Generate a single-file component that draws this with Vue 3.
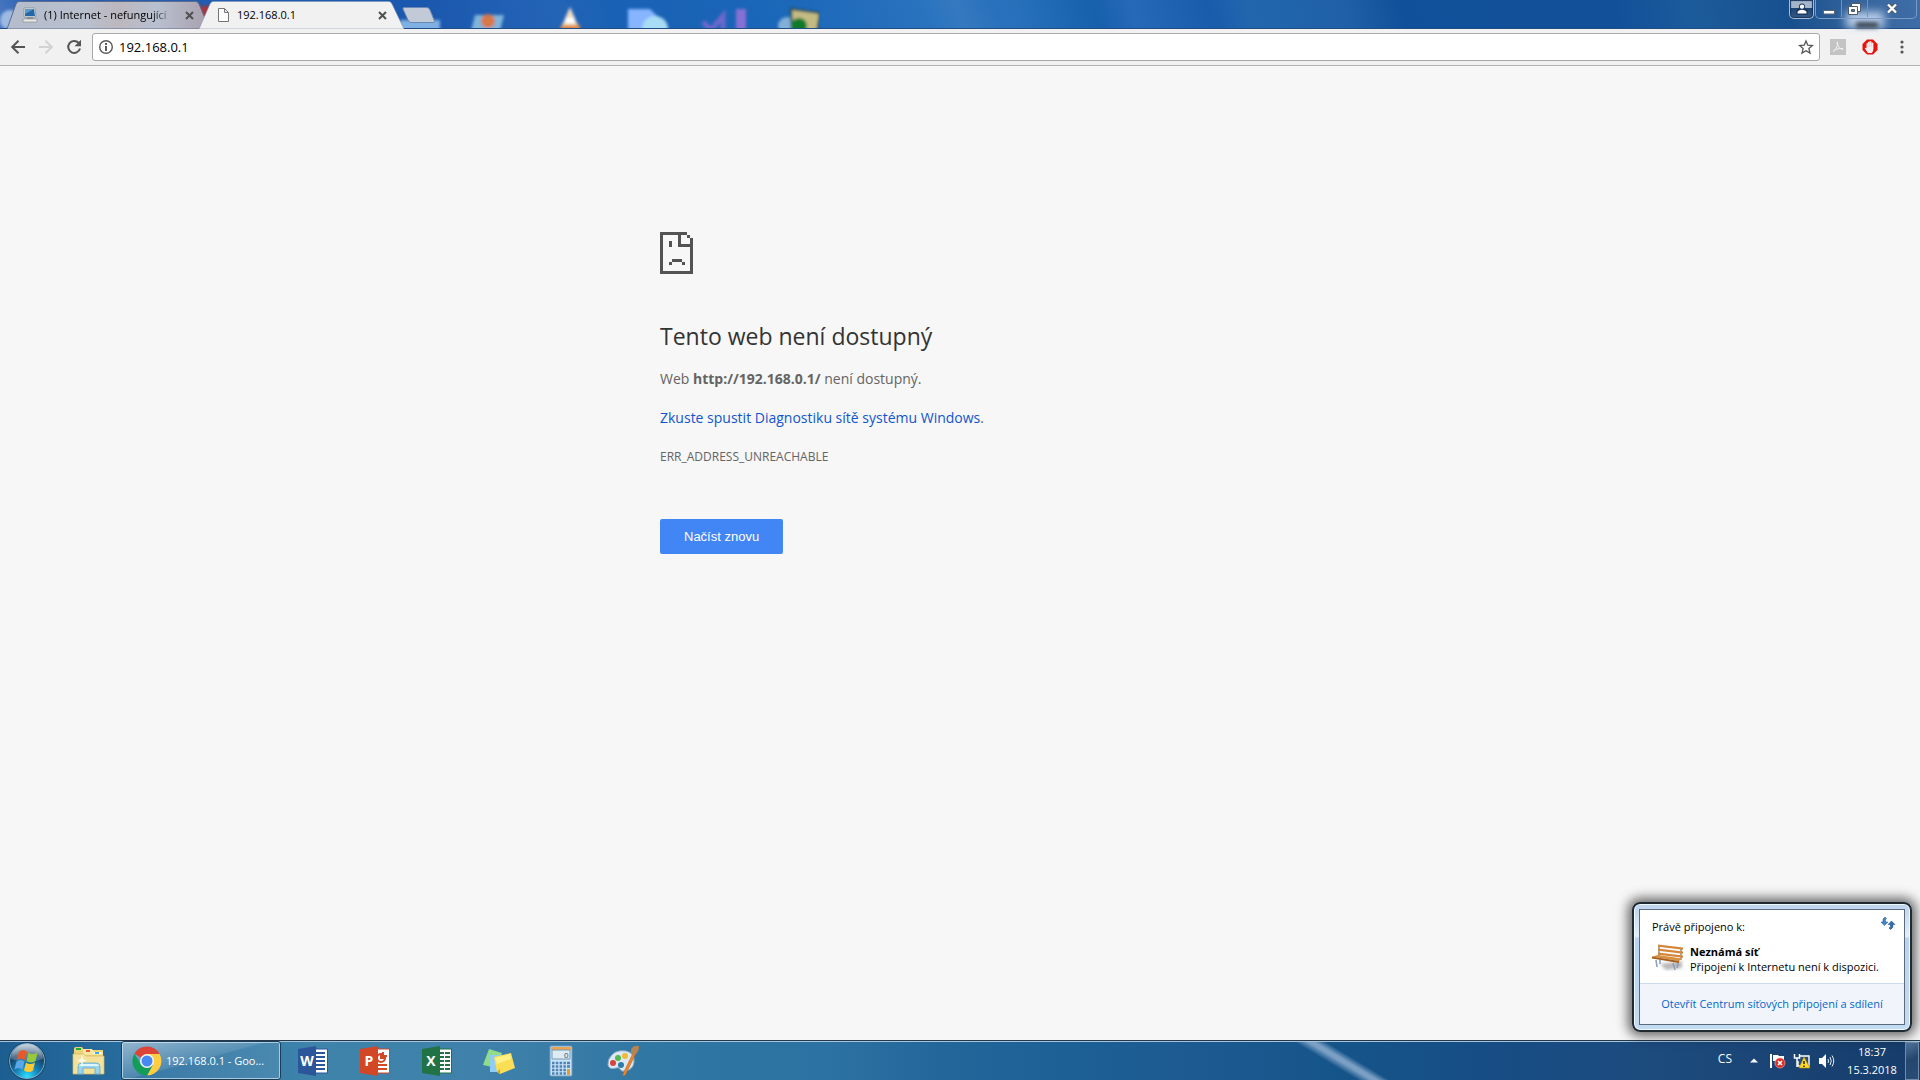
<template>
  <div class="desktop">
    <header class="titlebar">
      <svg class="wallpaper-icons" width="820" height="28" viewBox="0 0 820 28" aria-hidden="true">
        <defs><filter id="glass" x="-20%" y="-20%" width="140%" height="140%"><feGaussianBlur stdDeviation="1.600" /></filter></defs>
        <g filter="url(#glass)">
          <rect x="196" y="6" width="22" height="22" fill="#a8343c" />
          <circle cx="10" cy="20" r="10" fill="#9dbbe2" />
          <rect x="400" y="20" width="40" height="12" fill="#7fb0e4" />
          <path d="M475 15h29l-4 16h-29z" fill="#7fb4dc" />
          <circle cx="488" cy="21" r="7" fill="#d8784a" />
          <path d="M570 7l10 23h-20z" fill="#f2ddc8" />
          <path d="M566 18h8v5h-8z" fill="#fff" />
          <path d="M561 25h19v5h-19z" fill="#e08a3c" />
          <path d="M628 9h22l8 8v14h-30z" fill="#86b4ff" />
          <circle cx="655" cy="29" r="13" fill="#a8dcf4" />
          <path d="M703 22l8 8 12-14v16" fill="none" stroke="#6d68cc" stroke-width="5" />
          <path d="M736 9h10v22h-10z" fill="#8670d4" />
          <circle cx="787" cy="26" r="9" fill="#83b0d8" />
          <path d="M791 9l29 4-3 20h-25z" fill="#c4bb84" stroke="#26434a" stroke-width="2" />
          <circle cx="799" cy="26" r="8" fill="#0d7a2c" />
        </g>
      </svg>

      <nav class="tabs" aria-label="Karty">
        <div class="tab idle">
          <svg class="tab-shape" viewBox="0 0 200 28" preserveAspectRatio="none" aria-hidden="true">
            <defs>
              <linearGradient id="idleTab">
                <stop offset="0" stop-color="#b4bccd" /><stop offset=".4" stop-color="#b9c0ce" />
                <stop offset=".55" stop-color="#bcb7be" /><stop offset=".75" stop-color="#b8c0d0" />
                <stop offset="1" stop-color="#aaa0ae" />
              </linearGradient>
            </defs>
            <path d="M0 28L9 3Q10 .5 12 .5H189Q191 .5 192 3L200 22V28Z" fill="url(#idleTab)" stroke="#5d6c8c" />
          </svg>
          <svg class="favicon" viewBox="0 0 16 16" aria-hidden="true">
            <path d="M2 1h11l1 9H2z" fill="#e4e8e8" stroke="#7d8990" stroke-width=".7" />
            <path d="M3 2h9l1 7H3z" fill="#2566a4" /><path d="M3 2h9L3 7z" fill="#5b9aca" />
            <path d="M5 10h6v2H5z" fill="#8b9399" /><path d="M1 12h14v3H1z" fill="#e8e8e2" stroke="#7f8588" stroke-width=".6" />
          </svg>
          <button class="tab-title" type="button">(1) Internet - nefungující</button>
          <button class="tab-close" type="button" aria-label="Zavřít kartu">
            <svg viewBox="0 0 9 9"><path d="M1 1l7 7M8 1L1 8" /></svg>
          </button>
        </div>
        <div class="tab active">
          <svg class="tab-shape" viewBox="0 0 206 28" preserveAspectRatio="none" aria-hidden="true">
            <path d="M0 28L11 3Q12 .5 14 .5H190Q192 .5 193 3L205 28Z" fill="#f2f1f2" stroke="#7f95b5" stroke-width=".6" />
          </svg>
          <svg class="favicon" viewBox="0 0 16 16" aria-hidden="true">
            <path d="M3.500 1.500h6l4 4v9h-10zM9.500 1.500v4h4" fill="#fff" stroke="#757575" />
          </svg>
          <button class="tab-title" type="button">192.168.0.1</button>
          <button class="tab-close" type="button" aria-label="Zavřít kartu">
            <svg viewBox="0 0 9 9"><path d="M1 1l7 7M8 1L1 8" /></svg>
          </button>
        </div>
        <button class="new-tab" type="button" aria-label="Nová karta">
          <svg width="34" height="17" viewBox="0 0 34 17"><path d="M2 .5H25Q27 .5 28 3L32.500 14Q33 15.500 31 15.500H9Q7 15.500 6 13L1 2Q.5 .5 2 .5Z" fill="#c2cad8" stroke="#6d87b4" /></svg>
        </button>
      </nav>

      <div class="window-controls">
        <button class="profile" type="button" aria-label="Profil">
          <svg width="12" height="12" viewBox="0 0 12 12"><path d="M6 1.200a2.300 2.300 0 0 1 1.500 4.100q2.800.5 3.500 2.500v3.200H1V7.800q.7-2 3.500-2.500A2.300 2.300 0 0 1 6 1.200z" fill="#1c355c" stroke="#1c355c" stroke-width="1.600" /><circle cx="6" cy="3.600" r="2.200" fill="#fff" /><path d="M1.500 10.500V8.800Q3 6.800 6 6.800t4.500 2v1.700z" fill="#fff" /></svg>
        </button>
        <div class="frame-buttons">
          <button class="minimize" type="button" aria-label="Minimalizovat">
            <svg width="12" height="12" viewBox="0 0 12 12"><path d="M.5 7.500h11v3.500H.5z" fill="#fff" stroke="#5b6470" /></svg>
          </button>
          <button class="restore" type="button" aria-label="Obnovit">
            <svg width="13" height="12" viewBox="0 0 13 12"><path d="M3.500 .5h9v8h-9z" fill="#fff" stroke="#4f5a6a" /><path d="M.5 3.500h9v8h-9z" fill="#fff" stroke="#4f5a6a" /><path d="M3.500 6.500h3v2h-3z" fill="#5479a8" stroke="#4f5a6a" /></svg>
          </button>
          <button class="close" type="button" aria-label="Zavřít">
            <svg width="12" height="11" viewBox="0 0 12 11"><path d="M2 1.500l8 8M10 1.500l-8 8" stroke="#4f5a6a" stroke-width="4" /><path d="M2 1.500l8 8M10 1.500l-8 8" stroke="#fff" stroke-width="2.400" /></svg>
          </button>
        </div>
      </div>
    </header>

    <div class="toolbar">
      <button class="tool" type="button" aria-label="Zpět">
        <svg width="16" height="16" viewBox="0 0 16 16"><path d="M15 8H2.500M8.500 1.800L2.200 8l6.300 6.200" fill="none" stroke="#555" stroke-width="2" /></svg>
      </button>
      <button class="tool" type="button" aria-label="Vpřed" disabled>
        <svg width="16" height="16" viewBox="0 0 16 16"><path d="M1 8h12.500M7.500 1.800L13.800 8l-6.300 6.200" fill="none" stroke="#d2d2d2" stroke-width="2" /></svg>
      </button>
      <button class="tool" type="button" aria-label="Načíst stránku znovu">
        <svg width="16" height="16" viewBox="0 0 16 16"><path d="M12.600 3.800A6 6 0 1 0 14 9.500" fill="none" stroke="#555" stroke-width="2" /><path d="M15 .8v6.500H8.500z" fill="#555" /></svg>
      </button>
      <form class="omnibox" @submit.prevent>
        <svg width="16" height="16" viewBox="0 0 16 16" aria-hidden="true"><circle cx="8" cy="8" r="6.300" fill="none" stroke="#5a5a5a" stroke-width="1.400" /><path d="M7 7h2v5H7zM7 4h2v2H7z" fill="#5a5a5a" /></svg>
        <input v-model="url" type="text" name="url" aria-label="Adresa" />
        <button type="button" aria-label="Přidat záložku">
          <svg width="16" height="16" viewBox="0 0 16 16"><path d="M8 2l1.800 4.200 4.600.4-3.500 3 1.100 4.500L8 11.700l-4 2.400 1.100-4.500-3.500-3 4.600-.4z" fill="none" stroke="#555" stroke-width="1.300" /></svg>
        </button>
      </form>
      <div class="extensions">
        <button type="button" aria-label="Adobe Acrobat">
          <svg width="16" height="16" viewBox="0 0 16 16"><path d="M0 0h16v16H0z" fill="#c3c3c3" /><path d="M3 12.500C5 12 8 7 7.700 3.500 7.500 2 6.800 3 7.300 5c.7 3 3.500 5.500 5.500 5.300 1.500-.3-.5-1.300-3-.8C7 10 4 11 3 12.500z" fill="none" stroke="#f4f4f4" /></svg>
        </button>
        <button type="button" aria-label="Adblock">
          <svg width="16" height="16" viewBox="0 0 16 16"><path d="M5 .5h6L15.500 5v6L11 15.500H5L.5 11V5z" fill="#e8140c" /><path d="M5.500 13.500L2.800 9.300q.6-1 1.700 0V4.500q.8-1 1.500 0V3q.9-1.200 1.700 0v-.5q1-1.100 1.700 0V4q1-1 2 0v6q0 2-1.500 4H6z" fill="#f2f0f0" /><path d="M6 4.500V8M7.700 3v5M9.400 3v5" stroke="#d8b0b0" stroke-width=".4" /></svg>
        </button>
        <button type="button" aria-label="Nabídka">
          <svg width="16" height="16" viewBox="0 0 16 16" fill="#555"><circle cx="8" cy="3" r="1.600" /><circle cx="8" cy="8" r="1.600" /><circle cx="8" cy="13" r="1.600" /></svg>
        </button>
      </div>
    </div>

    <main class="page">
      <section class="error">
        <svg width="33" height="42" viewBox="0 0 33 42" fill="#535353" shape-rendering="crispEdges" aria-hidden="true">
          <path d="M0 0h27v3H3v36h27V6h3v36H0zM27 3h3v3h-3zM18 3h3v9h9v3H18zM9 9h3v6H9zM12 27h10v3H12zM9 30h3v3H9zM22 30h3v3h-3z" />
        </svg>
        <h1>Tento web není dostupný</h1>
        <p>Web <strong>http://192.168.0.1/</strong> není dostupný.</p>
        <p><a href="#">Zkuste spustit Diagnostiku sítě systému Windows</a>.</p>
        <p class="code">ERR_ADDRESS_UNREACHABLE</p>
        <button class="reload" type="button">Načíst znovu</button>
      </section>
    </main>

    <aside class="network-popup">
      <div class="popup-body">
        <div class="popup-top">
          <div class="popup-heading">
            <span>Právě připojeno k:</span>
            <button type="button" aria-label="Aktualizovat">
              <svg width="16" height="16" viewBox="0 0 16 16"><path d="M5 1L6.500 2.500Q4.700 3.500 5.500 6H8L4.300 9.500 1 6h2Q2.300 2.500 5 1z" fill="#3f86cc" stroke="#23568f" stroke-width=".5" /><path d="M11.500 5L15 8.500h-2Q13.500 12 10.500 13.500L9 12q2-1 1.300-3.500H8z" fill="#2f6fb4" stroke="#1e4b84" stroke-width=".5" /></svg>
            </button>
          </div>
          <div class="network">
            <svg width="34" height="30" viewBox="0 0 34 30" aria-hidden="true">
              <defs><filter id="soft"><feGaussianBlur stdDeviation="1.500" /></filter></defs>
              <path d="M9 21l22-3v7l-16 2z" fill="#b9b9b9" filter="url(#soft)" />
              <path d="M8 2v12M30 5v12" stroke="#8594a6" stroke-width="1.500" />
              <path d="M7 1.500l25 3v2.200l-25-3zM7 5.500l25 3v2.200l-25-3zM7 9.500l25 3v2.200l-25-3z" fill="#d4863a" />
              <path d="M1 13.500l6-1.500 24 3.500-3 2.500z" fill="#d8923f" /><path d="M1 13.500L28 18v2L1 15.500z" fill="#a75f20" />
              <path d="M5 17l1 7M9 17v4M22 20l2 7M27 20l-1 5" stroke="#8ca0ba" stroke-width="1.600" />
            </svg>
            <div>
              <strong>Neznámá síť</strong>
              <span>Připojení k Internetu není k dispozici.</span>
            </div>
          </div>
        </div>
        <a href="#">Otevřít Centrum síťových připojení a sdílení</a>
      </div>
    </aside>

    <footer class="taskbar">
      <button class="start" type="button" aria-label="Start">
        <svg width="38" height="38" viewBox="0 0 38 38">
          <defs>
            <radialGradient id="orb" cx=".5" cy=".95" r=".9"><stop offset="0" stop-color="#2fe0ff" /><stop offset=".4" stop-color="#147cb4" /><stop offset=".75" stop-color="#173f62" /><stop offset="1" stop-color="#5a7f9c" /></radialGradient>
            <linearGradient id="shine" x2="0" y2="1"><stop offset="0" stop-color="#fff" stop-opacity=".65" /><stop offset="1" stop-color="#fff" stop-opacity=".12" /></linearGradient>
          </defs>
          <circle cx="19" cy="19" r="17.500" fill="url(#orb)" stroke="#8fb7cf" /><circle cx="19" cy="19" r="18.400" fill="none" stroke="#143a58" stroke-width=".7" />
          <path d="M3 17a16 15 0 0 1 32 0q-16 6-32 0z" fill="url(#shine)" />
          <path d="M11 9.500q4-3 8 0l-2 8.500q-4-3-8 0z" fill="#e8592a" /><path d="M20.500 10.500q4 3 9 0l-2 8.500q-4 3-9 0z" fill="#98c83c" />
          <path d="M8.500 19.500q4-3 8 0l-2 8q-4-3-8 0z" fill="#5ba8e8" /><path d="M18 20.500q4 3 9 0l-2 8q-4 3-9 0z" fill="#fbc934" />
        </svg>
      </button>
      <button class="task" type="button" aria-label="Průzkumník Windows">
        <svg width="34" height="32" viewBox="0 0 34 32">
          <path d="M2 4q0-2 2-2h6l2 3h19v23H2z" fill="#ecd279" /><path d="M4 3h5v2H4z" fill="#22ab35" /><path d="M11 4h9l2 3h9v3H11z" fill="#f7e7a1" /><path d="M14 5h4v2h-4z" fill="#e85b34" /><path d="M22 7h7v2h-7z" fill="#fff" /><path d="M23 7h4v2h-4z" fill="#3baae8" />
          <path d="M1 9h11l2 2h18v18H1z" fill="#f5e29a" stroke="#d5b861" stroke-width=".7" /><path d="M6 29v-7q0-4 4-4h14q4 0 4 4v7h-5v-6H11v6z" fill="#9bd4ee" stroke="#5faacb" stroke-width=".8" /><path d="M10 19h14q3 0 3 2H7q0-2 3-2z" fill="#dff5fc" /><path d="M10 9l1 5 4 2-4 1-1 5-1-5-4-1 4-2z" fill="#fff" opacity=".8" />
        </svg>
      </button>
      <button class="task running" type="button">
        <svg width="30" height="30" viewBox="0 0 30 30" aria-hidden="true">
          <path d="M15 15L2.400 7.700A14.500 14.500 0 0 1 27.600 8H15z" fill="#dc4437" /><path d="M15 8h12.600A14.500 14.500 0 0 1 15 29.500L21 18.500z" fill="#ffcd42" /><path d="M2.400 7.700L9 18.500 21 18.500 15 29.500A14.500 14.500 0 0 1 2.400 7.700z" fill="#149c5a" /><circle cx="15" cy="15" r="7" fill="#f5f5f5" /><circle cx="15" cy="15" r="5.500" fill="#4688f4" />
        </svg>
        <span>192.168.0.1 - Goo...</span>
      </button>
      <button v-for="app in offices" :key="app.letter" class="task" type="button" :aria-label="app.name">
        <svg width="32" height="32" viewBox="0 0 32 32">
          <path d="M17 4h13.500v24H17z" fill="#fff" stroke="currentColor" :class="app.tone" />
          <path :d="app.detail" fill="none" stroke="currentColor" stroke-width="2" :class="app.tone" />
          <path d="M1 4l18-3v30L1 28z" fill="currentColor" :class="app.tone" />
          <text x="10" y="21" text-anchor="middle">{{ app.letter }}</text>
        </svg>
      </button>
      <button class="task" type="button" aria-label="Rychlé poznámky">
        <svg width="34" height="30" viewBox="0 0 34 30"><path d="M7 3l13 4-5 15-14-3z" fill="#91dc86" /><path d="M8 9h15v17H8z" fill="#8fcdf6" /><path d="M12 11l17-4 4 15-15 6-3-2z" fill="#f9de56" /><path d="M13 12l15-4 1 5-14 5z" fill="#fff084" /><path d="M15 26l3-3v5z" fill="#d4a626" /></svg>
      </button>
      <button class="task" type="button" aria-label="Kalkulačka">
        <svg width="24" height="32" viewBox="0 0 24 32"><rect x="1" y="1" width="22" height="30" rx="1" fill="#c9e2f4" stroke="#6e9abf" /><path d="M2 2h20v3H2z" fill="#eba451" /><path d="M3 5h18v9H3z" fill="#dcebf4" stroke="#779ab4" /><text class="digit" x="15" y="13">0</text><path d="M3 18h14M3 21.500h14M3 25h14M3 28.500h14" stroke="#4d82b5" stroke-width="2.300" stroke-dasharray="2.500 1.300" /><path d="M18 18h3M18 21.500h3" stroke="#4d82b5" stroke-width="2.300" /><path d="M18 24h3v6h-3z" fill="#f09a26" /></svg>
      </button>
      <button class="task" type="button" aria-label="Malování">
        <svg width="34" height="32" viewBox="0 0 34 32"><path d="M3 14Q8 4 20 6q9 2 8 11-1 8-9 9-4 1-5-2-1-2-4-1-7 2-8-3 0-3 1-6z" fill="#dce9f3" stroke="#8badc9" /><circle cx="7" cy="18" r="3" fill="#d8433a" /><circle cx="12" cy="13" r="3" fill="#54b84c" /><circle cx="19" cy="11" r="3" fill="#f1b938" /><circle cx="15" cy="20" r="3" fill="#2e7da7" /><path d="M27 8l2 2-9 19q-3 4-3 0z" fill="#e9872c" stroke="#b65d17" stroke-width=".5" /><path d="M25 5q2-5 8-4 0 6-4 9l-4-2z" fill="#b98351" /></svg>
      </button>

      <div class="tray">
        <span class="lang">CS</span>
        <button class="expand" type="button" aria-label="Zobrazit skryté ikony"><svg width="8" height="5" viewBox="0 0 8 5"><path d="M0 4.500L4 .5l4 4z" fill="#fff" /></svg></button>
        <svg width="18" height="18" viewBox="0 0 18 18" aria-hidden="true"><path d="M2 2v14" stroke="#fff" stroke-width="2" /><path d="M4 3h5l1 1h5v6H9L8 9H4z" fill="#fff" /><circle cx="11" cy="11" r="5" fill="#dc2e26" stroke="#f3a29b" stroke-width=".7" /><path d="M9 9l4 4M13 9l-4 4" stroke="#fff" stroke-width="1.600" /></svg>
        <svg width="18" height="18" viewBox="0 0 18 18" aria-hidden="true"><path d="M7 4h9v10H5V9" fill="#284e7c" stroke="#fff" stroke-width="1.400" /><path d="M1.500 2v4h5V2M4 6v9" fill="none" stroke="#fff" stroke-width="1.500" /><path d="M11 5l6 11H6z" fill="#ffdd29" stroke="#b78d00" stroke-width=".6" /><path d="M11 9v3M11 13.500V15" stroke="#222" stroke-width="1.500" /></svg>
        <svg width="18" height="18" viewBox="0 0 18 18" aria-hidden="true"><path d="M2 6h3l4-4v14l-4-4H2z" fill="#fff" /><path d="M11 7q1 2 0 4M13 5q2.500 4 0 8M15 3.500q3.500 5.500 0 11" fill="none" stroke="#e6edf4" /></svg>
        <button class="clock" type="button"><time>18:37</time><time>15.3.2018</time></button>
        <button class="show-desktop" type="button" aria-label="Zobrazit plochu"></button>
      </div>
    </footer>
  </div>
</template>

<script setup>
import { ref } from 'vue';

const url = ref('192.168.0.1');

const offices = [
  { letter: 'W', name: 'Word', tone: 'word', detail: 'M19 8h9M19 12h9M19 16h9M19 20h9M19 24h9' },
  { letter: 'P', name: 'PowerPoint', tone: 'powerpoint', detail: 'M22 9a4 4 0 1 0 4 4h-4zM24 7v4h4M19 20h9M19 24h9' },
  { letter: 'X', name: 'Excel', tone: 'excel', detail: 'M19 8h4M24 8h5M19 12h4M24 12h5M19 16h4M24 16h5M19 20h4M24 20h5M19 24h4M24 24h5' }
];
</script>

<style>
body { margin: 0; }
</style>

<style scoped>
.desktop { position: relative; display: flex; flex-direction: column; min-height: 100vh; overflow: hidden; background: #f7f7f7; color: #000; font-family: "Open Sans", "Noto Sans", sans-serif; font-size: 11px; }
button { display: flex; align-items: center; justify-content: center; margin: 0; border: 0; background: none; color: inherit; padding: 0; font: inherit; }
svg { display: block; flex: none; }
a { text-decoration: none; }

.titlebar { position: relative; display: flex; justify-content: space-between; height: 28px; border-bottom: 1px solid #234c84; background: linear-gradient(65deg, transparent 0 48%, rgba(255,255,255,.06) 50%, transparent 52%), linear-gradient(75deg, #4a79c2 0, #2a5fb0 2%, #1a57ae 22%, #2464b6 29%, #1961b4 32%, #1a66b8 40%, #2872be 48%, #2870ba 53%, #1660ac 57%, #2669b8 59%, #185cab 63%, #2167ae 65%, #2060a8 70%, #10509a 73%, #125099 84%, #1c5b9b 88%, #17508e 93%, #38659c 97%, #3e6da8 100%); }
.wallpaper-icons { position: absolute; top: 0; left: 0; }
.tabs { position: relative; display: flex; align-items: flex-start; padding-left: 7px; }
.tab { position: relative; display: flex; align-items: center; box-sizing: border-box; height: 28px; margin-top: 1px; }
.tab.idle { width: 200px; padding: 0 10px 0 15px; }
.tab.active { width: 206px; margin-left: -8px; padding: 0 15px 0 16px; }
.tab-shape { position: absolute; inset: 0; width: 100%; height: 100%; }
.favicon { position: relative; width: 16px; height: 16px; }
.tab-title { position: relative; flex: 1; min-width: 0; justify-content: flex-start; overflow: hidden; margin-left: 6px; line-height: 20px; white-space: nowrap; }
.idle .tab-title { mask-image: linear-gradient(90deg, #000 84%, transparent); }
.tab-close { position: relative; width: 16px; height: 16px; margin-left: 8px; }
.tab-close svg { width: 9px; height: 9px; fill: none; stroke: #505050; stroke-width: 2; }
.new-tab { margin: 7px 0 0 -3px; }

.window-controls { position: relative; display: flex; align-items: flex-start; gap: 1px; padding-right: 3px; }
.window-controls::before { content: ""; position: absolute; right: 36px; bottom: 0; width: 38px; height: 16px; background: #d6e6fb; filter: blur(5px); opacity: .85; }
.window-controls::after { content: ""; position: absolute; right: 42px; bottom: 0; width: 22px; height: 6px; background: #3d4855; filter: blur(2px); }
.profile, .frame-buttons { position: relative; z-index: 1; box-sizing: border-box; height: 19px; border: 1px solid #a5bdd8; border-top: 0; border-radius: 0 0 5px 5px; }
.profile { width: 25px; background: linear-gradient(#a4b4ca 0 45%, #1f4272 45%, #365d8d); box-shadow: inset 0 0 1px 1px #183459; }
.frame-buttons { display: flex; width: 102px; border-color: #7b9bc3; }
.frame-buttons button { width: 26px; height: 17px; border-right: 1px solid #7293bd; }
.frame-buttons .close { flex: 1; border: 0; }
.frame-buttons svg { fill: none; }

.toolbar { display: flex; align-items: center; box-sizing: border-box; height: 37px; border-bottom: 1px solid #b2b1b2; background: #f2f1f2; padding: 0 10px 0 4px; }
.tool { width: 28px; height: 28px; }
.omnibox { display: flex; flex: 1; align-items: center; box-sizing: border-box; height: 28px; margin-left: 4px; border: 1px solid #a8a8a8; border-radius: 3px; background: #fff; padding: 0 5px; }
.omnibox input { flex: 1; min-width: 0; margin-left: 5px; border: 0; outline: 0; background: transparent; color: #000; padding: 0; font: 13px "Open Sans", "Noto Sans", sans-serif; }
.extensions { display: flex; gap: 16px; margin-left: 10px; }

.page { flex: 1; padding: 0 24px; }
.error { max-width: 600px; margin: 0 auto; padding-top: 166px; color: #646464; font-size: 14px; line-height: 22px; }
.error h1 { margin: 47px 0 0; color: #333; font-size: 23px; font-weight: 400; line-height: 30px; }
.error p { margin: 17px 0 0; }
.error a { color: #1155cc; }
.error .code { font-size: 12px; }
.reload { height: 35px; margin-top: 51px; border-radius: 2px; background: #4285f4; color: #fff; padding: 0 24px; font: 13px "Liberation Sans", Roboto, sans-serif; }

.network-popup { position: absolute; right: 8px; bottom: 48px; box-sizing: border-box; width: 280px; border: 2px solid #1f2a33; border-radius: 8px; background: linear-gradient(#bcd4ee 0, #e2eefa 26%, #b8d4f0 27%, #c3dcf3 100%); padding: 5px; box-shadow: 0 0 12px 4px rgba(0,0,0,.6), inset 0 0 0 1px #eef8ff; }
.popup-body { border: 1px solid #5e6b7c; background: #fff; }
.popup-top { padding: 8px 8px 9px 12px; }
.popup-heading { display: flex; justify-content: space-between; line-height: 18px; }
.popup-heading button { width: 16px; height: 16px; margin-top: -2px; }
.network { display: flex; gap: 5px; margin: 7px 0 0 -1px; }
.network > div { display: flex; flex-direction: column; white-space: nowrap; line-height: 15px; }
.network strong { margin-top: 1px; }
.popup-body > a { display: block; border-top: 1px solid #ccd9ea; background: #f1f5fb; color: #0066cc; line-height: 40px; text-align: center; white-space: nowrap; }

.taskbar { display: flex; align-items: stretch; box-sizing: border-box; height: 40px; border-top: 1px solid #25384d; background: linear-gradient(31deg, transparent 0 68.4%, rgba(190,210,235,.6) 69.1% 69.4%, transparent 70%), linear-gradient(90deg, #1d5e91 0, #286d9f 7%, #3e83aa 16%, #3f81aa 25%, #2f76a3 35%, #2c72a2 43%, #226599 50%, #1c6096 56%, #1d5a91 62%, #155489 70%, #174c83 79%, #1d4b7e 86%, #163c6a 100%); box-shadow: inset 0 1px #a6c5db; }
.start { box-sizing: border-box; width: 58px; padding-right: 4px; }
.task { width: 62px; }
.task.running { box-sizing: border-box; width: 160px; justify-content: flex-start; gap: 4px; margin: 0 1px; border: 1px solid #1c3d55; border-radius: 3px; background: linear-gradient(165deg, rgba(255,255,255,.5), rgba(255,255,255,.18) 48%, rgba(255,255,255,.08) 50%); color: #fff; padding-left: 10px; box-shadow: inset 0 0 0 1px rgba(220,240,250,.65); white-space: nowrap; }
.word { color: #2b579a; }
.powerpoint { color: #d24726; }
.excel { color: #217346; }
.task text { fill: #fff; font: 700 14px "Open Sans", sans-serif; }
.task .digit { fill: #35536c; font: 8px "Liberation Sans", sans-serif; }
.tray { display: flex; flex: none; align-items: center; gap: 6px; margin-left: auto; color: #fff; }
.lang { margin-right: 9px; padding-bottom: 4px; font-size: 12px; line-height: 20px; }
.expand { width: 14px; margin-right: 2px; }
.clock { flex-direction: column; width: 58px; margin-left: 2px; line-height: 18px; }
.show-desktop { box-sizing: border-box; align-self: stretch; width: 14px; margin: 1px 1px 0 -2px; border: 1px solid #718bab; background: linear-gradient(155deg, #53749b, #25466f 45%, #284d77); }
</style>
